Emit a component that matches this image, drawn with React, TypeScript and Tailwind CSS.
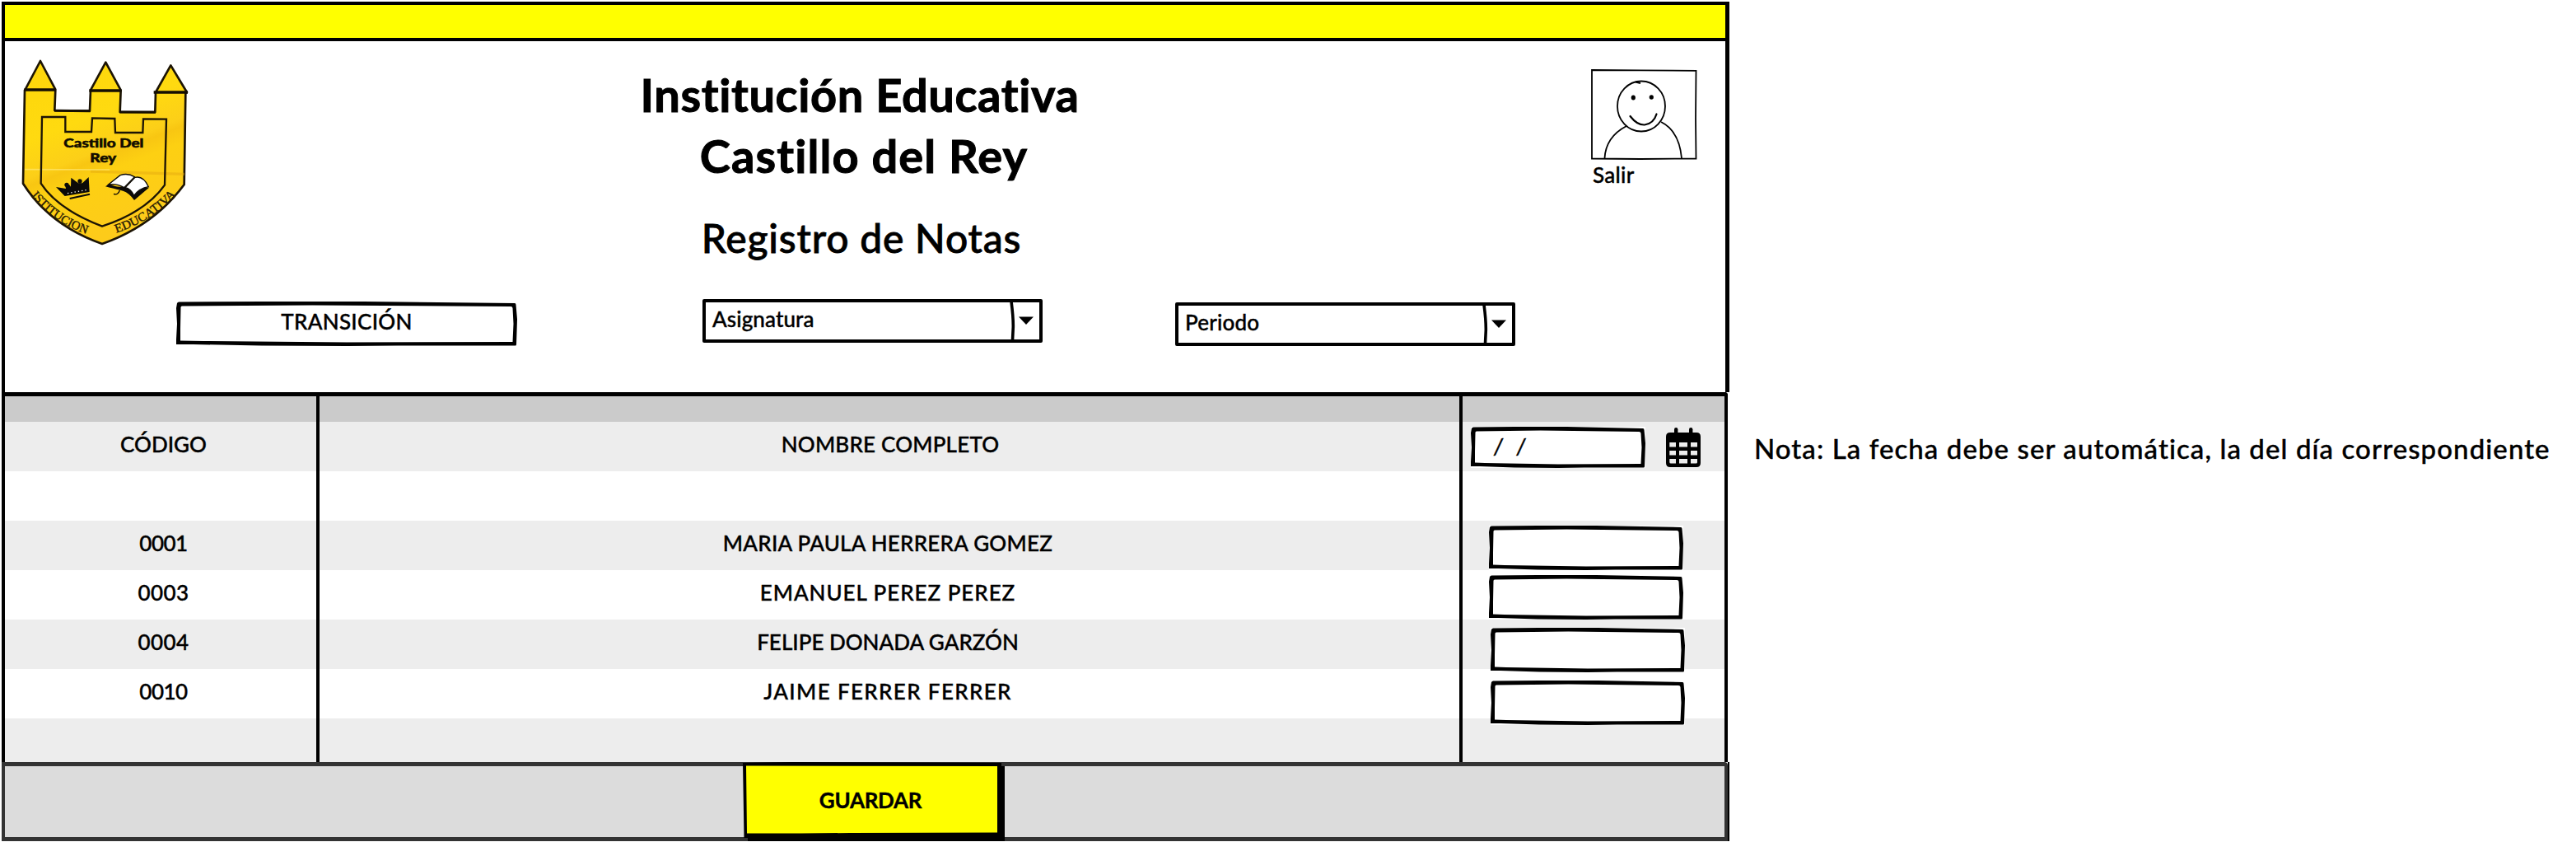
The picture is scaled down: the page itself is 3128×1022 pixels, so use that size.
import type { ReactNode } from "react";

/* Hand-drawn rectangle outline, slightly uneven along each side. */
function SketchFrame({ w, h }: { w: number; h: number }) {
  const outer = `M0 ${h * 0.15} L1 2 Q2 0 4 .5 L${w * 0.25} 0 L${w * 0.55} 0 L${w - 3} 2 Q${w - 1.5} 2 ${w - 1.5} 4 L${w} ${h * 0.4} L${w - 1} ${h - 2} Q${w - 1} ${h} ${w - 3} ${h - 0.5} L${w * 0.65} ${h - 0.6} L${w * 0.5} ${h} L${w * 0.25} ${h - 0.5} L${w * 0.05} ${h - 2} L0 ${h - 2} L0 ${h * 0.85} L1 ${h * 0.5} Z`;
  const inner = `M5.5 7 Q5.5 5.5 7 5.5 L${w * 0.4} 4.5 L${w - 8} 6 Q${w - 5.5} 6 ${w - 5.5} 8 L${w - 4.5} ${h * 0.5} L${w - 5.5} ${h - 5} L${w * 0.5} ${h - 4.5} L${w * 0.08} ${h - 6} L5 ${h - 6.5} L5 ${h * 0.6} Z`;
  return (
    <svg className="absolute inset-0 h-full w-full" viewBox={`0 0 ${w} ${h}`} preserveAspectRatio="none">
      <path d={outer + inner} fill="#000" fillRule="evenodd" />
    </svg>
  );
}

function Logo() {
  return (
    <svg className="h-[250px] w-[240px] shrink-0 [-webkit-text-stroke:0]" viewBox="18 0 720 750" fill="none">
      <defs>
        <linearGradient id="gold" x1="0" y1="0" x2="0.35" y2="1">
          <stop offset="0" stopColor="#fdd60a" />
          <stop offset="0.4" stopColor="#ffda10" />
          <stop offset="0.58" stopColor="#fccf18" />
          <stop offset="0.62" stopColor="#f8c612" />
          <stop offset="0.7" stopColor="#fdd012" />
          <stop offset="1" stopColor="#fdcb1a" />
        </linearGradient>
        <path id="arcLeft" d="M113 563 Q205 668 322 704" />
        <path id="arcRight" d="M424 698 Q550 657 645 556" />
      </defs>
      <path
        d="M92 176 L147 72 L202 176 L199 252 L327 254 L330 178 L385 77 L440 178 L437 258 L565 258 L567 186 L622 88 L681 186 L676 190 L671 522 Q560 672 372 738 Q180 670 84 518 L90 178 Z"
        fill="url(#gold)"
        stroke="#1c1405"
        strokeWidth="8"
        strokeLinejoin="round"
      />
      <path d="M330 474 L672 484" stroke="#e3a60f" strokeWidth="10" opacity="0.45" />
      <path d="M90 467 L400 468" stroke="#ffe873" strokeWidth="5" opacity="0.7" />
      <path d="M88 177 H204 M325 180 H442 M560 186 H684" stroke="#140e02" strokeWidth="10" />
      <path d="M198 253 L329 254 M436 258 L567 259" stroke="#140e02" strokeWidth="9" />
      <path
        d="M153 276 L238 276 L238 330 L333 330 L336 280 L418 282 L420 333 L520 333 L522 283 L606 284 L600 524 Q530 622 372 674 Q210 612 149 518 Z"
        stroke="#1c1405"
        strokeWidth="7"
      />
      <g stroke="#120c00" strokeWidth="1.500">
        <text x="232" y="388" textLength="291" lengthAdjust="spacingAndGlyphs" className="fill-[#120c00] font-['Lato'] text-[44px] font-black">
          Castillo Del
        </text>
        <text x="328" y="441" textLength="96" lengthAdjust="spacingAndGlyphs" className="fill-[#120c00] font-['Lato'] text-[44px] font-black">
          Rey
        </text>
      </g>
      <g stroke="#2a1c05" strokeWidth="1.200">
        <text className="fill-[#2a1c05] font-['Liberation_Serif'] text-[45px]">
          <textPath href="#arcLeft" textLength="248" lengthAdjust="spacingAndGlyphs">ISTITUCION</textPath>
        </text>
        <text className="fill-[#2a1c05] font-['Liberation_Serif'] text-[45px]">
          <textPath href="#arcRight" textLength="260" lengthAdjust="spacingAndGlyphs">EDUCATIVA</textPath>
        </text>
      </g>
      <path d="M204 531 L240 537 L238 526 L252 522 L258 530 L259 497 L285 517 L300 517 L323 495 L326 549 L236 564 Z" fill="#0c0a08" />
      <circle cx="243" cy="523" r="8" fill="#0c0a08" />
      <circle cx="291" cy="510" r="8" fill="#0c0a08" />
      <path d="M254 573 L327 557" stroke="#0c0a08" strokeWidth="6" />
      <path d="M246 554 L314 542" stroke="#fff" strokeWidth="4" strokeDasharray="4 9" />
      <path d="M384 529 L399 519 Q420 533 450 529 Q472 530 488 553 Q512 528 543 533 Q520 552 489 579 Q470 552 448 545 L432 541 Q420 538 384 529 Z" fill="#0c0a08" />
      <path d="M392 524 L438 488 Q466 479 490 494 L452 533 Q420 515 392 524 Z" fill="#fff" stroke="#0c0a08" strokeWidth="4" />
      <path d="M456 533 L492 496 Q522 489 541 530 Q508 535 488 562 Q476 536 456 533 Z" fill="#fff" stroke="#0c0a08" strokeWidth="4" />
      <path d="M414 556 Q430 562 436 543" stroke="#0c0a08" strokeWidth="4" />
    </svg>
  );
}

function Avatar() {
  return (
    <svg className="block h-[110px] w-[129px]" viewBox="0 0 129 110" fill="none" stroke="#000" strokeWidth="1.8">
      <path d="M1 1 L60 1.4 L127.5 1.8 L127 60 L127.5 108.5 L60 109 L1 108.5 Z" />
      <ellipse cx="61" cy="45" rx="29" ry="30.5" />
      <path d="M54 15.500 L60 17" strokeWidth="2" />
      <path d="M43 69 Q18 82 16.500 108 M85 64 Q107 75 110 108" />
      <path d="M47.500 57 Q56 68 65 67.500 Q76 66 79.500 54.500" strokeWidth="2.200" strokeLinecap="round" />
      <ellipse cx="51.300" cy="34.500" rx="2.600" ry="2.900" fill="#000" stroke="none" />
      <ellipse cx="73.300" cy="34" rx="2.600" ry="2.700" fill="#000" stroke="none" />
    </svg>
  );
}

function CalendarIcon() {
  return (
    <svg className="h-12 w-[42px]" viewBox="0 0 42 48">
      <rect x="10" y="0" width="4.400" height="10" rx="2.200" />
      <rect x="28" y="0" width="4.400" height="10" rx="2.200" />
      <path
        fillRule="evenodd"
        d="M5 6 H37 Q42 6 42 11 V43 Q42 48 37 48 H5 Q0 48 0 43 V11 Q0 6 5 6 Z M4.300 18 V23.500 H12 V18 Z M16 18 V23.500 H26 V18 Z M30 18 V23.500 H38 V18 Z M4.300 28 V33.500 H12 V28 Z M16 28 V33.500 H26 V28 Z M30 28 V33.500 H38 V28 Z M4.300 38 V42 Q4.300 43.500 6 43.500 H12 V38 Z M16 38 V43.500 H26 V38 Z M30 38 V43.500 H36.500 Q38 43.500 38 42 V38 Z"
      />
    </svg>
  );
}

function Select({ children, className }: { children: ReactNode; className: string }) {
  return (
    <div className={`relative flex h-[53px] w-[413px] shrink-0 rounded-[2px] border-4 border-black bg-white ${className}`}>
      <div className="flex flex-1 items-center pb-[6px] pl-[8px]">{children}</div>
      <svg className="h-[45px] w-[37px]" viewBox="0 0 37 45">
        <path d="M3 -1 Q5.500 18 5.300 30 L4.500 46" fill="none" stroke="#000" strokeWidth="3.600" />
        <path d="M12 17.500 L30 17.500 L21 27 Z" />
      </svg>
    </div>
  );
}

const rows = [
  { code: "", codeCls: "", name: "", cls: "", bg: "bg-white", field: "" },
  { code: "0001", codeCls: "tracking-[-0.5px]", name: "MARIA PAULA HERRERA GOMEZ", cls: "tracking-[0.25px]", bg: "bg-[#ededed]", field: "mt-[6px] ml-[32px]" },
  { code: "0003", codeCls: "tracking-[0.4px]", name: "EMANUEL PEREZ PEREZ", cls: "tracking-[0.95px]", bg: "bg-white", field: "mt-[6px] ml-[32px]" },
  { code: "0004", codeCls: "tracking-[0.4px]", name: "FELIPE DONADA GARZÓN", cls: "tracking-[0px]", bg: "bg-[#ededed]", field: "mt-[10px] ml-[34px]" },
  { code: "0010", codeCls: "tracking-[-0.5px]", name: "JAIME FERRER FERRER", cls: "tracking-[1.35px]", bg: "bg-white", field: "mt-[14px] ml-[34px]" },
  { code: "", codeCls: "", name: "", cls: "", bg: "bg-[#ededed]", field: "" },
];

export default function App() {
  return (
    <main className="flex h-[1022px] w-[3128px] overflow-hidden bg-white font-['Lato',sans-serif] text-[26px] leading-[32px] font-medium text-black [-webkit-text-stroke:0.4px_#000]">
      <div className="ml-[2px] flex w-[2098px] shrink-0 flex-col pt-[2px]">
        <div className="h-[48px] border-4 border-r-[5px] border-black bg-[#ffff00]" />

        <header className="h-[426px] border-r-[5px] border-l-4 border-black">
          <div className="flex h-[313px] items-start">
            <Logo />
            <div className="ml-[340px] flex w-[920px] flex-col items-center pt-[28px]">
              <h1 className="flex flex-col items-center text-[56px] leading-[74px] font-bold [-webkit-text-stroke:1px_#000]">
                <span className="mr-[4px] tracking-[0.6px]">Institución Educativa</span>
                <span className="ml-[6px] tracking-[1.1px]">Castillo del Rey</span>
              </h1>
              <h2 className="mt-[35px] text-[48px] leading-[56px] [-webkit-text-stroke:0.8px_#000]">
                <span className="tracking-[0.8px]">Registro de Notas</span>
              </h2>
            </div>
            <div className="mt-[34px] ml-[426px]">
              <Avatar />
              <div className="mt-[2px] pl-[2px]">
                <span className="tracking-[0.3px]">Salir</span>
              </div>
            </div>
          </div>
          <div className="flex items-start pl-[208px]">
            <div className="relative mt-[3px] flex h-[54px] w-[414px] shrink-0 justify-center bg-white pt-[8px]">
              <SketchFrame w={414} h={54} />
              <span className="relative tracking-[0.3px]">TRANSICIÓN</span>
            </div>
            <Select className="ml-[225px]">
              <span className="tracking-[0.1px]">Asignatura</span>
            </Select>
            <Select className="mt-[4px] ml-[161px]">
              <span className="tracking-[0.2px]">Periodo</span>
            </Select>
          </div>
        </header>

        <section className="h-[449px] w-[2096px] overflow-hidden rounded-tr-[4px] border-x-4 border-t-[5px] border-black">
          <div className="grid h-[31px] grid-cols-[382px_1388px_1fr] bg-[#cbcbcb]">
            <div className="border-r-4 border-black" />
            <div className="border-r-4 border-black" />
          </div>
          <div className="grid grid-cols-[382px_1388px_1fr] grid-rows-[60px] bg-[#ededed]">
            <div className="flex items-center justify-center border-r-4 border-black pb-[6px] pl-[7px]">
              <span>CÓDIGO</span>
            </div>
            <div className="flex items-center justify-center border-r-4 border-black pb-[6px] pl-[2px]">
              <span className="tracking-[0.2px]">NOMBRE COMPLETO</span>
            </div>
            <div className="flex items-start">
              <div className="relative mt-[6px] ml-[10px] h-[50px] w-[212px] bg-white pt-[8px] pl-[28px]">
                <SketchFrame w={212} h={50} />
                <span className="relative tracking-[1.5px] whitespace-pre italic">/&nbsp; /</span>
              </div>
              <div className="mt-[7px] ml-[25px]">
                <CalendarIcon />
              </div>
            </div>
          </div>
          {rows.map((r, i) => (
            <div key={i} className={`grid grid-cols-[382px_1388px_1fr] grid-rows-[60px] ${r.bg}`}>
              <div className="flex items-center justify-center border-r-4 border-black pb-[6px] pl-[7px]">
                {r.code && <span className={r.codeCls}>{r.code}</span>}
              </div>
              <div className="flex items-center justify-center border-r-4 border-black pr-[4px] pb-[6px]">
                {r.name && <span className={r.cls}>{r.name}</span>}
              </div>
              <div className="flex items-start">
                {r.field && (
                  <div className={`relative z-10 h-[54px] w-[236px] bg-white ${r.field}`}>
                    <SketchFrame w={236} h={54} />
                  </div>
                )}
              </div>
            </div>
          ))}
        </section>

        <footer className="h-[96px] border-r-2 border-black">
          <div className="flex h-[96px] w-[2096px] items-start rounded-tr-[4px] border-[5px] border-r-4 border-l-4 border-[#333] bg-[#dcdcdc]">
            <button className="relative -mt-[5px] ml-[896px] flex h-[96px] w-[318px] items-center justify-center pr-[8px] pb-[5px] font-bold">
              <svg className="absolute inset-0 h-full w-full" viewBox="0 0 318 96">
                <path d="M0 1 L60 0 L314 1 V5 H318 V96 H6 V92 H1.500 Z" />
                <path d="M4 4.500 L5 86.500 L70 86.500 L130 86 L309 85.500 V5 Z" fill="#ffff00" />
              </svg>
              <span className="relative tracking-[-0.3px]">GUARDAR</span>
            </button>
          </div>
        </footer>
      </div>
      <p className="mt-[523px] ml-[30px] text-[33px] leading-[42px] whitespace-nowrap">
        <span className="tracking-[1.07px]">Nota: La fecha debe ser automática, la del día correspondiente</span>
      </p>
    </main>
  );
}
